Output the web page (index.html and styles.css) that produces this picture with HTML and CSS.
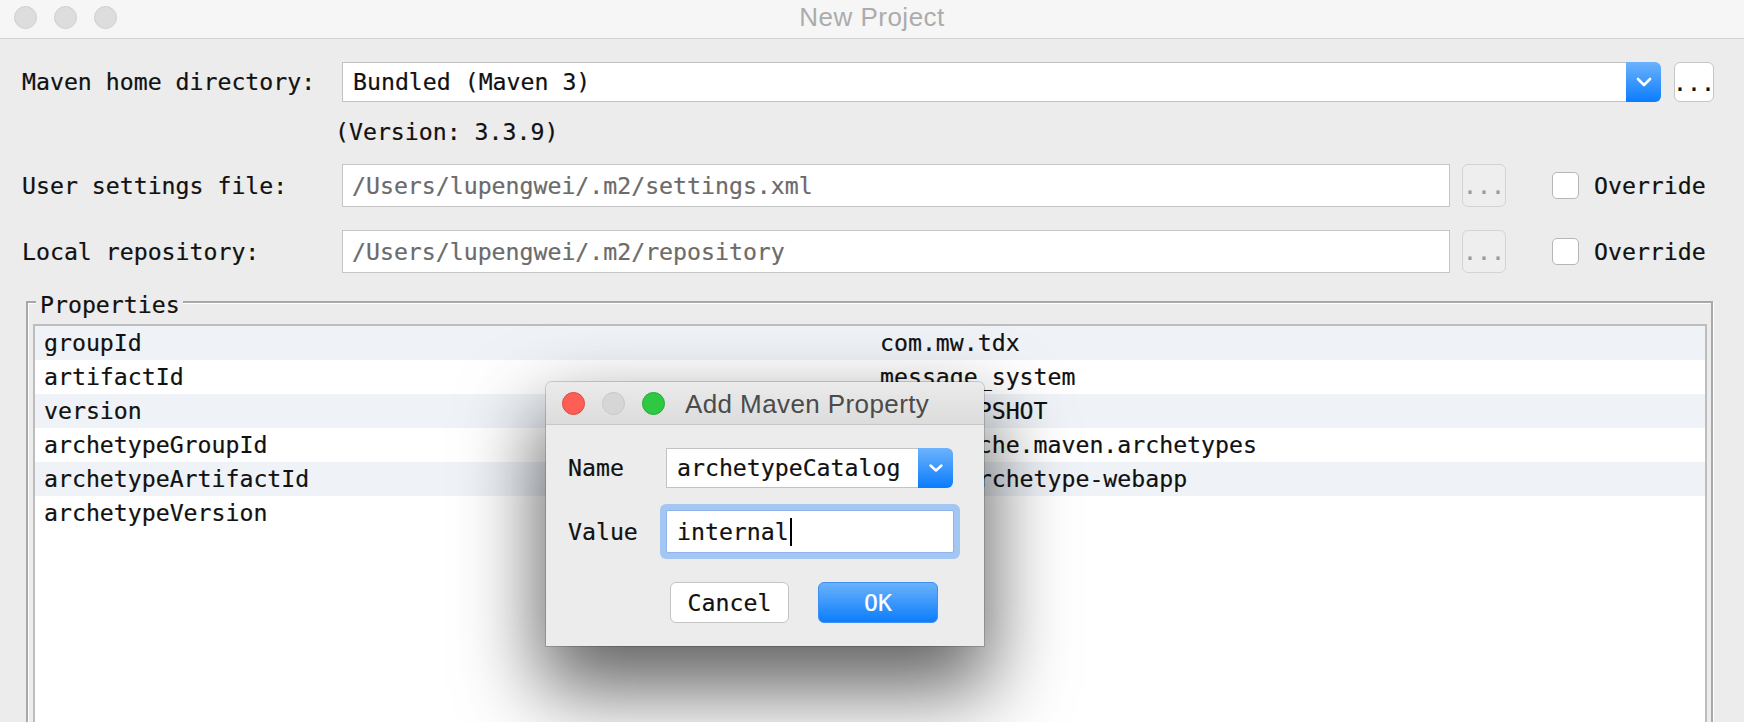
FILE: index.html
```html
<!DOCTYPE html>
<html lang="en">
<head>
<meta charset="utf-8">
<title>New Project</title>
<link rel="stylesheet" href="styles.css">
</head>
<body>
<div class="window">
  <header class="titlebar">
    <div class="lights">
      <span class="light"></span><span class="light"></span><span class="light"></span>
    </div>
    <div class="title">New Project</div>
    <div></div>
  </header>

  <main class="content">
    <div class="row">
      <span class="label">Maven home directory:</span>
      <div class="combo">
        <span class="combo-text">Bundled (Maven 3)</span>
        <span class="combo-btn">
          <svg width="16" height="10" viewBox="0 0 16 10"><path d="M2 2 L8 8 L14 2" fill="none" stroke="#fff" stroke-width="2.6" stroke-linecap="round" stroke-linejoin="round"/></svg>
        </span>
      </div>
      <button class="dots">...</button>
    </div>
    <div class="version">(Version: 3.3.9)</div>

    <div class="row row-file">
      <span class="label">User settings file:</span>
      <div class="field">/Users/lupengwei/.m2/settings.xml</div>
      <button class="dots dots-off">...</button>
      <span class="check"></span>
      <span class="check-label">Override</span>
    </div>

    <div class="row row-file row-repo">
      <span class="label">Local repository:</span>
      <div class="field">/Users/lupengwei/.m2/repository</div>
      <button class="dots dots-off">...</button>
      <span class="check"></span>
      <span class="check-label">Override</span>
    </div>

    <fieldset class="props">
      <legend class="props-legend">Properties</legend>
      <div class="table">
        <div class="trow"><span class="cell">groupId</span><span class="cell">com.mw.tdx</span></div>
        <div class="trow"><span class="cell">artifactId</span><span class="cell">message_system</span></div>
        <div class="trow"><span class="cell">version</span><span class="cell">1.0-SNAPSHOT</span></div>
        <div class="trow"><span class="cell">archetypeGroupId</span><span class="cell">org.apache.maven.archetypes</span></div>
        <div class="trow"><span class="cell">archetypeArtifactId</span><span class="cell">maven-archetype-webapp</span></div>
        <div class="trow"><span class="cell">archetypeVersion</span><span class="cell">RELEASE</span></div>
      </div>
    </fieldset>
  </main>

  <div class="dialog">
    <div class="dlg-titlebar">
      <span class="dlg-light red"></span>
      <span class="dlg-light gray"></span>
      <span class="dlg-light green"></span>
      <span class="dlg-title">Add Maven Property</span>
    </div>
    <div class="dlg-body">
      <div class="dlg-row">
        <span class="dlg-label">Name</span>
        <div class="combo dlg-combo">
          <span class="combo-text">archetypeCatalog</span>
          <span class="combo-btn">
            <svg width="16" height="10" viewBox="0 0 16 10"><path d="M2.5 2.5 L8 7.5 L13.5 2.5" fill="none" stroke="#fff" stroke-width="2.4" stroke-linecap="round" stroke-linejoin="round"/></svg>
          </span>
        </div>
      </div>
      <div class="dlg-row dlg-row-value">
        <span class="dlg-label">Value</span>
        <div class="dlg-field">internal<span class="caret"></span></div>
      </div>
      <div class="dlg-buttons">
        <button class="btn btn-cancel">Cancel</button>
        <button class="btn btn-ok">OK</button>
      </div>
    </div>
  </div>
</div>
</body>
</html>
```

FILE: styles.css
```css
html, body {
  margin: 0;
  padding: 0;
}
body {
  background: #ececec;
  font-family: "DejaVu Sans Mono", "Liberation Mono", monospace;
  font-size: 23.2px;
  color: #111;
  overflow: hidden;
  -webkit-text-stroke: 0.2px currentColor;
}
.window {
  position: relative;
  width: 1744px;
  height: 722px;
  overflow: hidden;
}

/* title bar */
.titlebar {
  height: 38px;
  border-bottom: 1px solid #d3d3d3;
  background: #f6f6f6;
  display: grid;
  grid-template-columns: 1fr auto 1fr;
}
.lights {
  display: flex;
  gap: 17px;
  padding: 6px 0 0 14px;
}
.light {
  width: 23px;
  height: 23px;
  border-radius: 50%;
  background: #dddddd;
  border: 1px solid #d0d0d0;
  box-sizing: border-box;
}
.title {
  font-family: "Liberation Sans", Arial, sans-serif;
  font-size: 26px;
  line-height: 35px;
  letter-spacing: 0.5px;
  color: #acacac;
  -webkit-text-stroke: 0;
}

/* form */
.content {
  padding: 23px 30px 0 20px;
}
.row {
  display: flex;
  align-items: center;
}
.label {
  flex: 0 0 320px;
  padding-left: 2px;
  line-height: 28px;
  white-space: nowrap;
}
.combo {
  flex: 1;
  height: 40px;
  display: flex;
}
.combo-text {
  flex: 1;
  background: #fff;
  border: 1px solid #c2c2c2;
  border-right: 0;
  padding-left: 10px;
  line-height: 38px;
  white-space: nowrap;
}
.combo-btn {
  flex: 0 0 35px;
  border-radius: 0 6px 6px 0;
  background: linear-gradient(#6cb3fc, #0b7cfd);
  display: flex;
  align-items: center;
  justify-content: center;
}
.dots {
  margin-left: 13px;
  width: 40px;
  height: 40px;
  box-sizing: border-box;
  padding: 0;
  border: 1px solid #c6c6c6;
  border-radius: 6px;
  background: #fff;
  font: inherit;
  color: #111;
  display: flex;
  align-items: center;
  justify-content: center;
  white-space: nowrap;
}
.version {
  margin-top: 16px;
  padding-left: 315px;
  line-height: 28px;
}
.row-file {
  margin-top: 18px;
}
.row-repo {
  margin-top: 23px;
}
.field {
  flex: 0 0 1108px;
  height: 43px;
  box-sizing: border-box;
  border: 1px solid #c6c6c6;
  background: #fff;
  padding-left: 9px;
  line-height: 41px;
  color: #6b6b6b;
  white-space: nowrap;
}
.dots-off {
  margin-left: 12px;
  width: 44px;
  height: 43px;
  background: #eeeeee;
  border-color: #d3d3d3;
  color: #9b9b9b;
}
.check {
  margin-left: 46px;
  width: 27px;
  height: 27px;
  box-sizing: border-box;
  border: 1px solid #b6b6b6;
  border-radius: 5px;
  background: #fff;
}
.check-label {
  margin-left: 15px;
  line-height: 28px;
}

/* properties */
.props {
  margin: 12px 1px 0 6px;
  padding: 5px 4px 0 5px;
  border: 2px solid #a8a8a8;
  box-shadow: inset 1px 1px 0 #fff, 1px 1px 0 #fff;
  min-width: 0;
}
.props-legend {
  margin-left: 3px;
  padding: 6px 3px 0 4px;
  line-height: 28px;
  background: #ececec;
}
.table {
  border: 2px solid #bdbdbd;
  background: #fff;
  height: 420px;
}
.trow {
  display: grid;
  grid-template-columns: 837px 1fr;
  height: 34px;
  line-height: 34px;
}
.trow:nth-child(odd) {
  background: #eff3f8;
}
.cell {
  padding-left: 9px;
  white-space: nowrap;
}
.cell + .cell {
  padding-left: 8px;
}

/* dialog */
.dialog {
  position: absolute;
  left: 546px;
  top: 382px;
  width: 438px;
  height: 264px;
  background: #ececec;
  border-radius: 6px 6px 0 0;
  box-shadow: 0 0 0 1px rgba(0, 0, 0, 0.16), 0 38px 80px 6px rgba(0, 0, 0, 0.62);
}
.dlg-titlebar {
  height: 43px;
  box-sizing: border-box;
  border-bottom: 1px solid #c8c8c8;
  border-radius: 6px 6px 0 0;
  background: linear-gradient(#ebebeb, #dcdcdc);
  display: flex;
  align-items: center;
  padding-left: 16px;
  gap: 17px;
}
.dlg-light {
  width: 23px;
  height: 23px;
  border-radius: 50%;
  box-sizing: border-box;
  flex: 0 0 23px;
}
.red { background: #fd5f57; border: 1px solid #e2463f; }
.gray { background: #d6d6d6; border: 1px solid #c8c8c8; }
.green { background: #2fc843; border: 1px solid #22ab31; }
.dlg-title {
  margin-left: 3px;
  padding-top: 3px;
  font-family: "Liberation Sans", Arial, sans-serif;
  font-size: 26px;
  line-height: 29px;
  letter-spacing: 0.4px;
  color: #4b4b4b;
  white-space: nowrap;
  -webkit-text-stroke: 0;
}
.dlg-body {
  padding: 23px 31px 0 21px;
}
.dlg-row {
  display: flex;
  align-items: center;
}
.dlg-label {
  flex: 0 0 98px;
  padding-left: 1px;
  line-height: 28px;
}
.dlg-combo {
  flex: 0 0 287px;
}
.dlg-combo .combo-text {
  padding-left: 10px;
}
.dlg-row-value {
  margin-top: 22px;
}
.dlg-field {
  flex: 0 0 288px;
  height: 43px;
  box-sizing: border-box;
  border: 1px solid #8fb6ea;
  border-radius: 2px;
  background: #fff;
  box-shadow: 0 0 0 6px #a3c7f2;
  padding-left: 10px;
  line-height: 41px;
  white-space: nowrap;
}
.caret {
  display: inline-block;
  width: 2px;
  height: 28px;
  margin-left: 1px;
  background: #000;
  vertical-align: -6px;
}
.dlg-buttons {
  margin-top: 29px;
  padding-left: 103px;
  display: flex;
  gap: 29px;
}
.btn {
  width: 119px;
  height: 41px;
  box-sizing: border-box;
  padding: 0;
  border-radius: 6px;
  font: inherit;
}
.btn-cancel {
  background: #fff;
  border: 1px solid #c4c4c4;
  color: #111;
}
.btn-ok {
  width: 120px;
  background: linear-gradient(#6ab2fb, #0c7dfc);
  border: 1px solid #3d8ff5;
  color: #fff;
}
```
